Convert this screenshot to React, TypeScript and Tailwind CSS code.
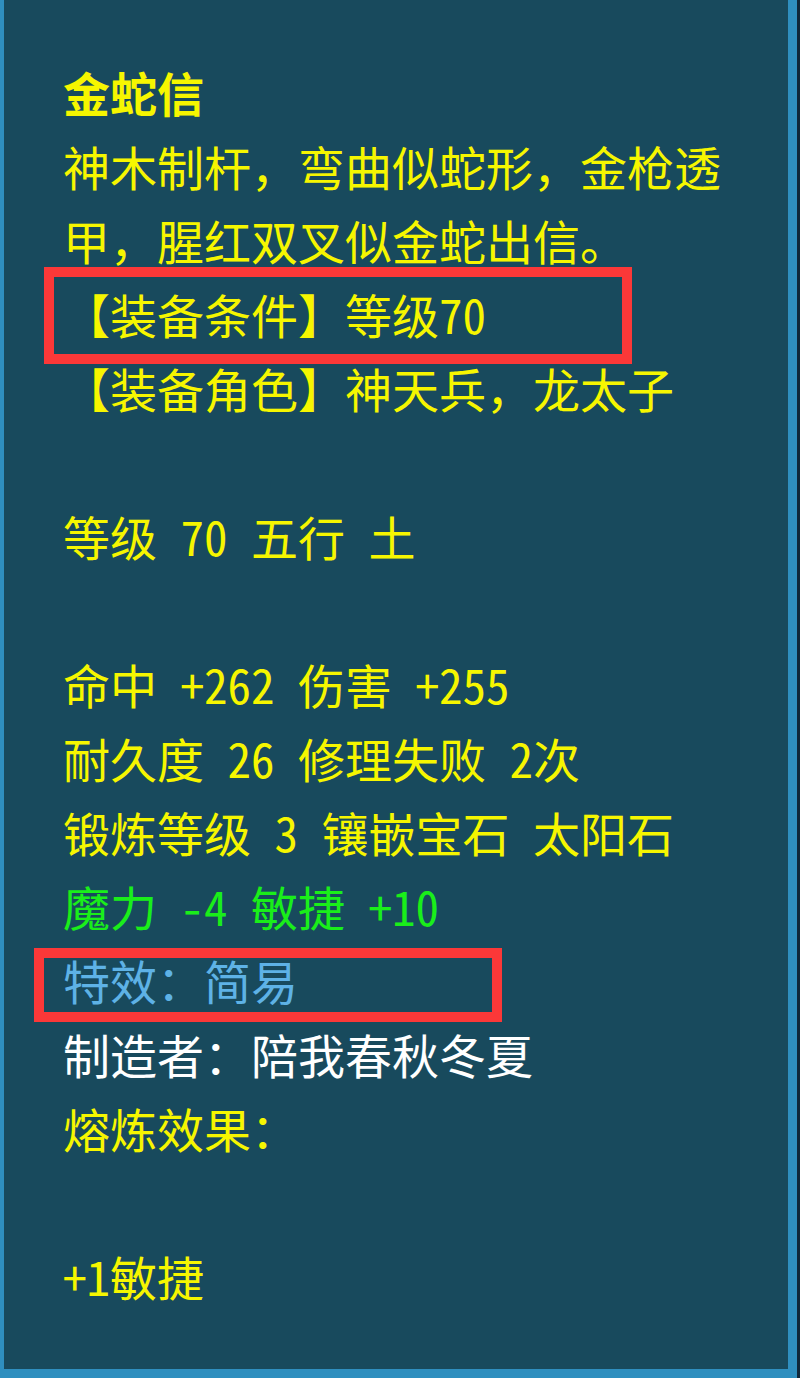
const LINES: { text: string; color?: string; bold?: boolean }[] = [
  { text: "金蛇信", bold: true },
  { text: "神木制杆，弯曲似蛇形，金枪透" },
  { text: "甲，腥红双叉似金蛇出信。" },
  { text: "【装备条件】等级70" },
  { text: "【装备角色】神天兵，龙太子" },
  { text: "" },
  { text: "等级 70 五行 土" },
  { text: "" },
  { text: "命中 +262 伤害 +255" },
  { text: "耐久度 26 修理失败 2次" },
  { text: "锻炼等级 3 镶嵌宝石 太阳石" },
  { text: "魔力 -4 敏捷 +10", color: "text-[#1aee1a]" },
  { text: "特效：简易", color: "text-[#5eb2e6]" },
  { text: "制造者：陪我春秋冬夏", color: "text-white" },
  { text: "熔炼效果：" },
  { text: "" },
  { text: "+1敏捷" },
];

export default function App() {
  return (
    <div className="flex h-[1378px] w-[800px] bg-[#10283a]">
      <div className="relative flex-1 border-b-[9px] border-l-4 border-r-[9px] border-[#2f8fbf] bg-[#184a5d] pl-[59px] pt-[55px]">
        <div className="font-['Noto_Sans_Mono_CJK_SC','Noto_Sans_CJK_SC',sans-serif] text-[47px] leading-[74px] text-[#f6f600]">
          {LINES.map((line, i) => (
            <div
              key={i}
              className={`h-[74px] whitespace-pre ${line.color ?? ""} ${line.bold ? "font-bold" : ""}`}
            >
              {line.text}
            </div>
          ))}
        </div>

        {/* annotation boxes */}
        <div className="absolute left-[40px] top-[267px] h-[97px] w-[588px] border-[10px] border-[#fb3838]" />
        <div className="absolute left-[30px] top-[948px] h-[74px] w-[468px] border-[10px] border-[#fb3838]" />
      </div>
      <div className="w-[3px]" />
    </div>
  );
}
